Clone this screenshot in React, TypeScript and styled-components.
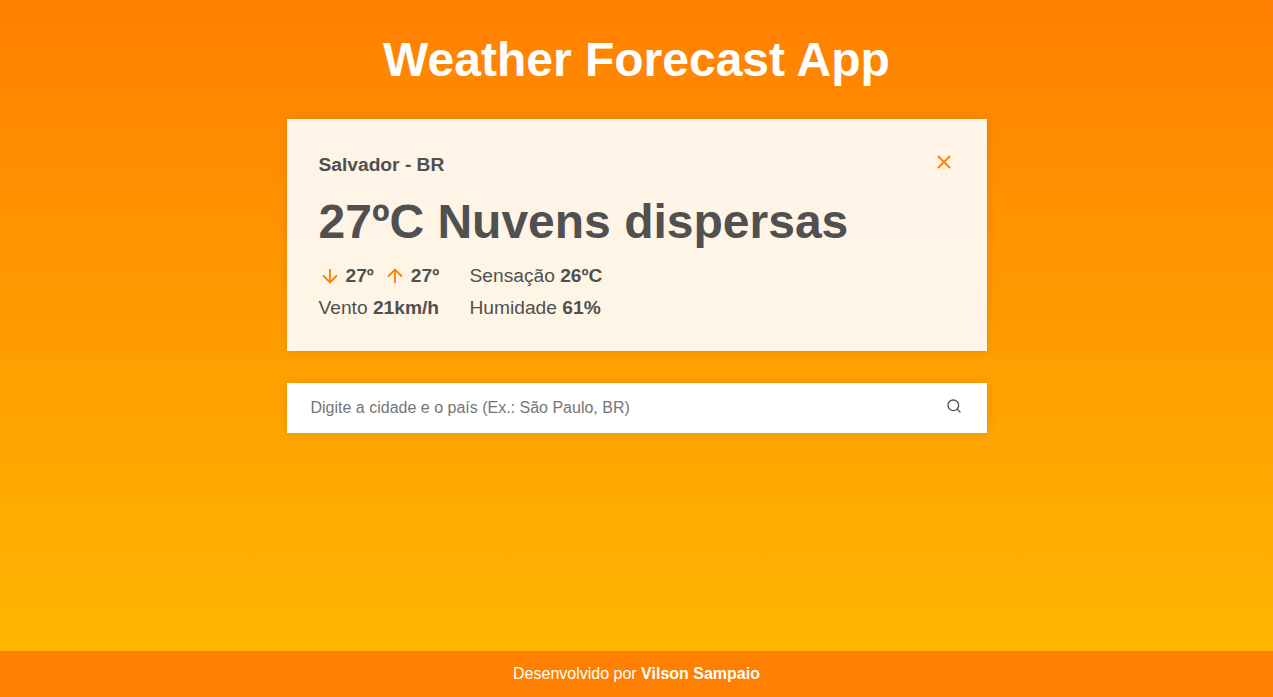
import React from 'react';
import styled, { createGlobalStyle } from 'styled-components';
import { FiArrowDown, FiArrowUp, FiSearch, FiX } from 'react-icons/fi';

const GlobalStyle = createGlobalStyle`
  * { margin: 0; padding: 0; box-sizing: border-box; }
  body {
    font-family: "Liberation Sans", Arial, sans-serif;
    color: #505050;
  }
`;

const Page = styled.div`
  display: flex;
  flex-direction: column;
  align-items: center;
  height: 100vh;
  background: linear-gradient(180deg, #ff8000 0%, #ffb700 651px);
`;

const Main = styled.main`
  flex: 1;
  width: 700px;
  padding-top: 32px;
`;

const Title = styled.h1`
  color: #fff;
  font-size: 48px;
  line-height: 55px;
  text-align: center;
  margin-bottom: 32px;
`;

const Card = styled.section`
  height: 232px;
  padding: 32px;
  background: rgba(255, 255, 255, 0.9);
  box-shadow: 0 0 10px rgba(0, 0, 0, 0.1);
  margin-bottom: 32px;
`;

const CardHeader = styled.header`
  display: flex;
  justify-content: space-between;
  align-items: flex-start;
  height: 27px;
`;

const City = styled.h2`
  font-size: 19.2px;
  line-height: 28px;
`;

const IconButton = styled.button<{ $color: string }>`
  display: flex;
  border: 0;
  background: transparent;
  color: ${({ $color }) => $color};
  cursor: pointer;
`;

const Condition = styled.p`
  font-size: 48px;
  font-weight: bold;
  line-height: 55px;
  margin: 16px 0 11px;
`;

const Details = styled.div`
  display: grid;
  grid-template-columns: 151px max-content;
  font-size: 19.2px;
  line-height: 32px;
`;

const Range = styled.div`
  display: flex;
  align-items: center;
  font-weight: bold;
  svg { color: #ff8000; margin-right: 5px; }
  span + svg { margin-left: 10px; }
`;

const SearchForm = styled.form`
  display: flex;
  align-items: center;
  height: 50px;
  padding: 0 25px 0 24px;
  background: #fff;
  box-shadow: 0 0 10px rgba(0, 0, 0, 0.1);
`;

const SearchButton = styled(IconButton)`
  padding-bottom: 4px;
`;

const SearchInput = styled.input`
  flex: 1;
  border: 0;
  outline: 0;
  background: transparent;
  font: 16px "Liberation Sans", Arial, sans-serif;
  &::placeholder { color: #757575; }
`;

const Footer = styled.footer`
  width: 100%;
  height: 46px;
  line-height: 46px;
  background: #ff8000;
  color: #fff;
  text-align: center;
  font-size: 16px;
`;

export default function App() {
  return (
    <Page>
      <GlobalStyle />
      <Main>
        <Title>Weather Forecast App</Title>
        <Card>
          <CardHeader>
            <City>Salvador - BR</City>
            <IconButton $color="#ff8000" aria-label="Fechar"><FiX size={22} /></IconButton>
          </CardHeader>
          <Condition>27ºC Nuvens dispersas</Condition>
          <Details>
            <Range>
              <FiArrowDown size={22} /><span>27º</span>
              <FiArrowUp size={22} /><span>27º</span>
            </Range>
            <p>Sensação <strong>26ºC</strong></p>
            <p>Vento <strong>21km/h</strong></p>
            <p>Humidade <strong>61%</strong></p>
          </Details>
        </Card>
        <SearchForm>
          <SearchInput placeholder="Digite a cidade e o país (Ex.: São Paulo, BR)" />
          <SearchButton $color="#505050" type="button" aria-label="Buscar"><FiSearch size={16} /></SearchButton>
        </SearchForm>
      </Main>
      <Footer>Desenvolvido por <strong>Vilson Sampaio</strong></Footer>
    </Page>
  );
}
